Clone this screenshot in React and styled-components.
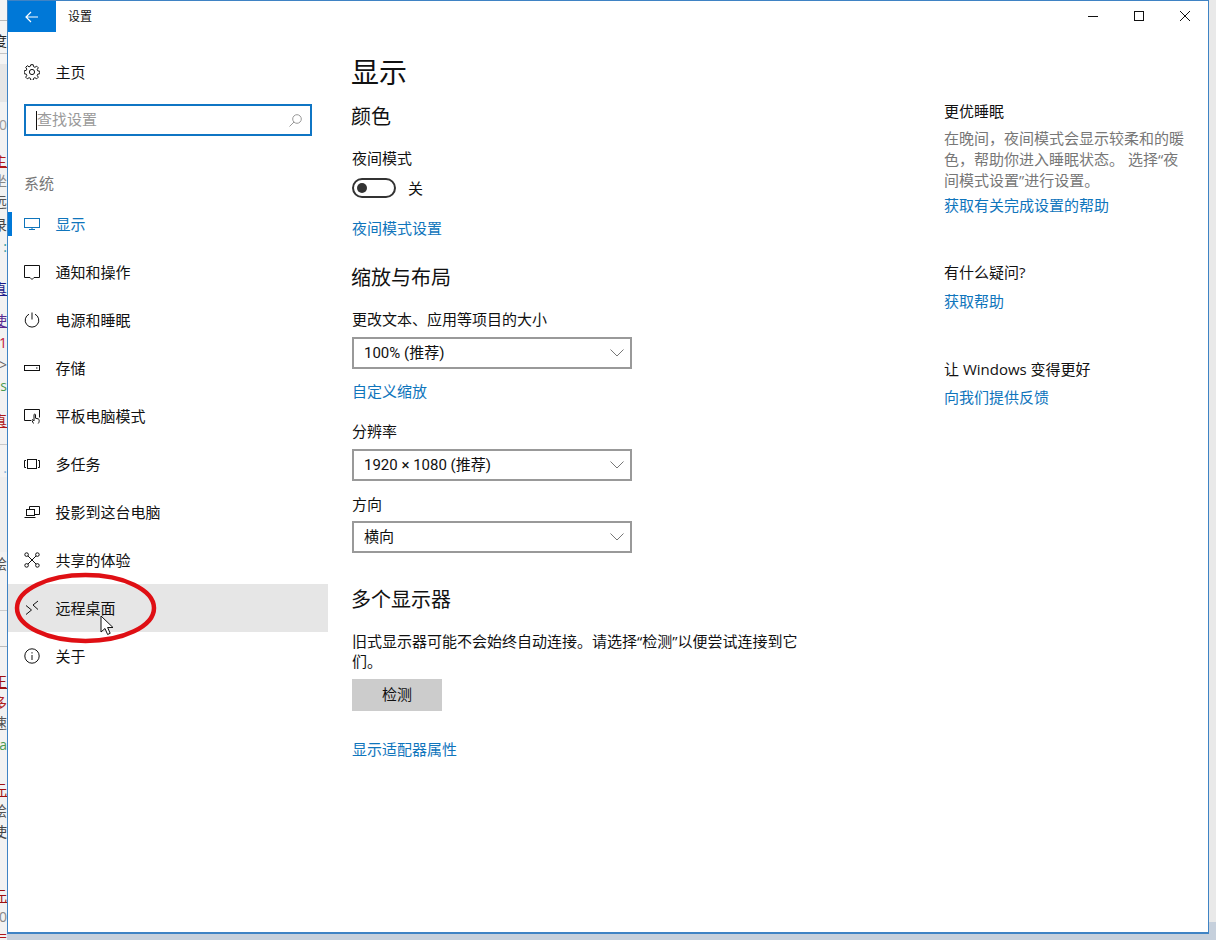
import React from 'react';
import styled, { createGlobalStyle } from 'styled-components';

const GlobalStyle = createGlobalStyle`
	html, body {
		margin: 0;
		padding: 0;
		background: #c6d0dc;
	}
	body {
		font-family: 'Open Sans', 'Noto Sans CJK SC', sans-serif;
		color: #111;
	}
`;

const stripRows = [
	{ h: 20, bg: '#f4f4f4' },
	{ h: 1, bg: '#b8b8b8' },
	{ h: 8, bg: '#f4f4f4' },
	{ h: 24, text: '度', color: '#222', bg: '#f4f4f4' },
	{ h: 1, bg: '#c4c4c4' },
	{ h: 10, bg: '#f4f4f4' },
	{ h: 38, bg: '#e6e6e6' },
	{ h: 13, bg: '#f2f2f2' },
	{ h: 20, text: '0', color: '#999', bg: '#f2f2f2' },
	{ h: 15, bg: '#f2f2f2' },
	{ h: 22, text: '主', color: '#b01818', line: true, bg: '#f2f2f2' },
	{ h: 18, text: '坐', color: '#888', bg: '#f2f2f2' },
	{ h: 24, text: '远', color: '#555', bg: '#f2f2f2' },
	{ h: 22, text: '录', color: '#444', bg: '#f2f2f2' },
	{ h: 22, text: ':', color: '#2a9aa0', bg: '#f2f2f2' },
	{ h: 24, bg: '#f2f2f2' },
	{ h: 14, text: '真', color: '#1a1a8a', line: true, bg: '#f2f2f2' },
	{ h: 14, bg: '#f2f2f2' },
	{ h: 22, text: '使', color: '#5a2a90', line: true, bg: '#f2f2f2' },
	{ h: 22, text: '1', color: '#c0203a', bg: '#f2f2f2' },
	{ h: 22, text: '>', color: '#666', bg: '#f2f2f2' },
	{ h: 20, text: 's', color: '#4a9a50', bg: '#f2f2f2' },
	{ h: 14, bg: '#f2f2f2' },
	{ h: 22, text: '真', color: '#b01818', line: true, bg: '#f2f2f2' },
	{ h: 12, bg: '#f2f2f2' },
	{ h: 1, bg: '#c8c8c8' },
	{ h: 14, bg: '#f2f2f2' },
	{ h: 18, text: '.', color: '#7ab0d8', bg: '#f2f2f2' },
	{ h: 75, bg: '#eeeeee' },
	{ h: 24, text: '绘', color: '#555', bg: '#f2f2f2' },
	{ h: 16, text: '。', color: '#444', bg: '#f2f2f2' },
	{ h: 18, bg: '#f2f2f2' },
	{ h: 1, bg: '#cccccc' },
	{ h: 35, bg: '#f2f2f2' },
	{ h: 1, bg: '#bbbbbb' },
	{ h: 24, bg: '#f2f2f2' },
	{ h: 22, text: '正', color: '#a01010', line: true, bg: '#f2f2f2' },
	{ h: 20, text: '多', color: '#b02020', bg: '#f2f2f2' },
	{ h: 20, text: '速', color: '#555', bg: '#f2f2f2' },
	{ h: 24, text: 'a', color: '#4a9a50', bg: '#f2f2f2' },
	{ h: 22, bg: '#f2f2f2' },
	{ h: 22, text: '元', color: '#a01010', line: true, bg: '#f2f2f2' },
	{ h: 20, text: '绘', color: '#555', bg: '#f2f2f2' },
	{ h: 22, text: '使', color: '#444', bg: '#f2f2f2' },
	{ h: 42, bg: '#f2f2f2' },
	{ h: 22, text: '元', color: '#a01010', line: true, bg: '#f2f2f2' },
	{ h: 20, text: '0', color: '#888', bg: '#f2f2f2' },
	{ h: 18, text: '=', color: '#b01818', bg: '#f2f2f2' },
	{ h: 30, bg: '#d6dde6' },
];

const GearIcon = () => (
	<NavSvg viewBox="0 0 16 16">
		<circle cx="8" cy="8" r="2.6" />
		<path d="M6.8.7h2.4l.4 2 1.3.6 1.8-1.1 1.6 1.6-1.1 1.8.6 1.3 2 .4v2.4l-2 .4-.6 1.3 1.1 1.8-1.6 1.6-1.8-1.1-1.3.6-.4 2H6.8l-.4-2-1.3-.6-1.8 1.1-1.6-1.6 1.1-1.8-.6-1.3-2-.4V6.8l2-.4.6-1.3-1.1-1.8 1.6-1.6 1.8 1.1 1.3-.6z" />
	</NavSvg>
);

const MonitorIcon = () => (
	<NavSvg viewBox="0 0 16 16">
		<rect x="0.5" y="2.5" width="15" height="9" />
		<path d="M8 11.5v2M5 13.5h6" />
	</NavSvg>
);

const BubbleIcon = () => (
	<NavSvg viewBox="0 0 16 16">
		<path d="M.5 1.5h15v12H10l-2 2-2-2H.5z" />
	</NavSvg>
);

const PowerIcon = () => (
	<NavSvg viewBox="0 0 16 16">
		<path d="M8 .5v7M5 2.2a6.8 6.8 0 1 0 6 0" />
	</NavSvg>
);

const StorageIcon = () => (
	<NavSvg viewBox="0 0 16 16">
		<rect x="0.5" y="5.5" width="15" height="5" />
		<path d="M12 8h1.5" />
	</NavSvg>
);

const TabletIcon = () => (
	<NavSvg viewBox="0 0 16 16">
		<path d="M7 12.5H.5v-11h15v8" />
		<path d="M9.5 15.5 8 12.5c-.3-.8.6-1.2 1.1-.6l.9 1V6.8c0-1 1.5-1 1.5 0v3.4l2.5.6c.9.2 1.2.8 1.2 1.6 0 1.6-.4 2.4-1 3.1" />
	</NavSvg>
);

const MultitaskIcon = () => (
	<NavSvg viewBox="0 0 16 16">
		<rect x="3.5" y="3.5" width="9" height="9" />
		<path d="M2 4.5H.5v7H2M14 4.5h1.5v7H14" />
	</NavSvg>
);

const ProjectIcon = () => (
	<NavSvg viewBox="0 0 16 16">
		<path d="M5.5 5.5v-3h10v8h-5" />
		<rect x="2.5" y="5.5" width="8" height="6" />
		<path d="M.5 13.5h11" />
	</NavSvg>
);

const ShareIcon = () => (
	<NavSvg viewBox="0 0 16 16">
		<circle cx="2.6" cy="2.6" r="1.8" />
		<circle cx="13.4" cy="2.6" r="1.8" />
		<circle cx="2.6" cy="13.4" r="1.8" />
		<circle cx="13.4" cy="13.4" r="1.8" />
		<path d="M4 4l8 8M12 4l-8 8" />
	</NavSvg>
);

const RemoteIcon = () => (
	<NavSvg viewBox="0 0 16 16">
		<path d="M2 5.500 7.500 10 2 14.500M14 1 9 5l5 4.500" />
	</NavSvg>
);

const InfoIcon = () => (
	<NavSvg viewBox="0 0 16 16">
		<circle cx="8" cy="8" r="7.2" />
		<path d="M8 7v5M8 4.200v1.300" />
	</NavSvg>
);

const navItems = [
	{ label: '显示', Icon: MonitorIcon, active: true },
	{ label: '通知和操作', Icon: BubbleIcon },
	{ label: '电源和睡眠', Icon: PowerIcon },
	{ label: '存储', Icon: StorageIcon },
	{ label: '平板电脑模式', Icon: TabletIcon },
	{ label: '多任务', Icon: MultitaskIcon },
	{ label: '投影到这台电脑', Icon: ProjectIcon },
	{ label: '共享的体验', Icon: ShareIcon },
	{ label: '远程桌面', Icon: RemoteIcon, hover: true },
	{ label: '关于', Icon: InfoIcon },
];

const Chevron = () => (
	<svg width="14" height="8" viewBox="0 0 14 8" fill="none" stroke="#777" strokeWidth="1">
		<path d="M.5.500 7 7l6.500-6.500" />
	</svg>
);

export default function App() {
	return (
		<>
			<GlobalStyle />
			<Screen>
				<BackStrip>
					{stripRows.map((row, i) => (
						<StripRow key={i} $h={row.h} $bg={row.bg} $color={row.color} $line={row.line}>
							{row.text}
						</StripRow>
					))}
				</BackStrip>
				<Window>
					<TitleBar>
						<BackButton>
							<svg width="14" height="12" viewBox="0 0 14 12" fill="none" stroke="#fff" strokeWidth="1.2">
								<path d="M13 6H1M6 1 1 6l5 5" />
							</svg>
						</BackButton>
						<WindowTitle>设置</WindowTitle>
						<Controls>
							<ControlButton>
								<svg width="10" height="10" viewBox="0 0 10 10" fill="none" stroke="#111">
									<path d="M0 5.500h10" />
								</svg>
							</ControlButton>
							<ControlButton>
								<svg width="10" height="10" viewBox="0 0 10 10" fill="none" stroke="#111">
									<rect x="0.5" y="0.5" width="9" height="9" />
								</svg>
							</ControlButton>
							<ControlButton>
								<svg width="10" height="10" viewBox="0 0 10 10" fill="none" stroke="#111">
									<path d="M0 0l10 10M10 0 0 10" />
								</svg>
							</ControlButton>
						</Controls>
					</TitleBar>
					<Body>
						<Sidebar>
							<HomeRow>
								<GearIcon />
								<NavText>主页</NavText>
							</HomeRow>
							<SearchBox>
								<Caret />
								<SearchHint>查找设置</SearchHint>
								<svg width="13" height="13" viewBox="0 0 13 13" fill="none" stroke="#999" strokeWidth="1">
									<circle cx="8" cy="5" r="4.300" />
									<path d="M5 8 .5 12.500" />
								</svg>
							</SearchBox>
							<GroupLabel>系统</GroupLabel>
							<NavList>
								{navItems.map(({ label, Icon, active, hover }) => (
									<NavRow key={label} $active={active} $hover={hover}>
										<Icon />
										<NavText>{label}</NavText>
									</NavRow>
								))}
							</NavList>
						</Sidebar>
						<Content>
							<PageTitle>显示</PageTitle>
							<SectionTitle $top={10}>颜色</SectionTitle>
							<Label $top={18}>夜间模式</Label>
							<ToggleRow>
								<Toggle>
									<ToggleDot />
								</Toggle>
								<ToggleState>关</ToggleState>
							</ToggleRow>
							<TextLink $top={20}>夜间模式设置</TextLink>
							<SectionTitle $top={25}>缩放与布局</SectionTitle>
							<Label $top={18}>更改文本、应用等项目的大小</Label>
							<SelectBox $top={8}>
								<span>100% (推荐)</span>
								<Chevron />
							</SelectBox>
							<TextLink $top={12}>自定义缩放</TextLink>
							<Label $top={20}>分辨率</Label>
							<SelectBox $top={8}>
								<span>1920 × 1080 (推荐)</span>
								<Chevron />
							</SelectBox>
							<Label $top={13}>方向</Label>
							<SelectBox $top={7}>
								<span>横向</span>
								<Chevron />
							</SelectBox>
							<SectionTitle $top={32}>多个显示器</SectionTitle>
							<Paragraph>旧式显示器可能不会始终自动连接。请选择“检测”以便尝试连接到它们。</Paragraph>
							<DetectButton>检测</DetectButton>
							<TextLink $top={28}>显示适配器属性</TextLink>
						</Content>
						<Aside>
							<Label>更优睡眠</Label>
							<AsideText>在晚间，夜间模式会显示较柔和的暖色，帮助你进入睡眠状态。 选择“夜间模式设置”进行设置。</AsideText>
							<TextLink $top={4}>获取有关完成设置的帮助</TextLink>
							<Label $top={47}>有什么疑问?</Label>
							<TextLink $top={9}>获取帮助</TextLink>
							<Label $top={48}>让 Windows 变得更好</Label>
							<TextLink $top={8}>向我们提供反馈</TextLink>
						</Aside>
					</Body>
					<Ellipse width="146" height="74" viewBox="0 0 146 74" fill="none">
						<ellipse cx="73.500" cy="36" rx="68.500" ry="33" stroke="#df0f14" strokeWidth="4.500" />
					</Ellipse>
					<Pointer width="14" height="21" viewBox="0 0 14 21">
						<path d="M1 1v16l4-3.500 2.600 6 2.600-1.200-2.600-5.800h5.400z" fill="#fff" stroke="#111" strokeWidth="1" />
					</Pointer>
				</Window>
				<SideGutter />
			</Screen>
		</>
	);
}

const Screen = styled.div`
	display: flex;
	align-items: flex-start;
	width: 1216px;
	height: 940px;
	overflow: hidden;
	position: relative;
`;

const BackStrip = styled.div`
	display: flex;
	flex-direction: column;
	flex: 0 0 7px;
	height: 940px;
	overflow: hidden;
`;

const StripRow = styled.div`
	display: flex;
	flex: 0 0 ${(p) => p.$h}px;
	justify-content: flex-end;
	align-items: center;
	font-size: 14px;
	line-height: ${(p) => p.$h}px;
	overflow: hidden;
	color: ${(p) => p.$color || '#333'};
	background: ${(p) => p.$bg};
	text-decoration: ${(p) => (p.$line ? 'underline' : 'none')};
`;

const SideGutter = styled.div`
	flex: 0 0 7px;
	height: 922px;
	background: #e9e9e9;
`;

const Window = styled.div`
	position: relative;
	box-sizing: border-box;
	flex: 0 0 1202px;
	height: 934px;
	border: 1px solid #3f83c4;
	border-bottom-width: 2px;
	background: #fff;
`;

const TitleBar = styled.div`
	display: flex;
	align-items: center;
	height: 31px;
`;

const BackButton = styled.div`
	display: flex;
	align-items: center;
	justify-content: center;
	width: 48px;
	height: 31px;
	background: #0078d7;
`;

const WindowTitle = styled.div`
	margin: 0 0 2px 12px;
	font-size: 12px;
`;

const Controls = styled.div`
	display: flex;
	margin-left: auto;
`;

const ControlButton = styled.div`
	box-sizing: border-box;
	display: flex;
	align-items: center;
	justify-content: center;
	width: 46px;
	height: 31px;
	padding-bottom: 1px;
`;

const Body = styled.div`
	display: grid;
	grid-template-columns: 320px 616px 1fr;
`;

const Sidebar = styled.div`
	display: flex;
	flex-direction: column;
`;

const NavSvg = styled.svg.attrs({ fill: 'none', stroke: 'currentColor', strokeWidth: 1 })`
	flex: 0 0 16px;
	width: 16px;
	height: 16px;
	margin-right: 16px;
`;

const HomeRow = styled.div`
	display: flex;
	align-items: center;
	height: 24px;
	margin-top: 28px;
	padding-left: 16px;
	color: #111;
`;

const NavText = styled.span`
	margin-left: -0.5px;
	font-size: 15px;
	line-height: 20px;
`;

const SearchBox = styled.div`
	box-sizing: border-box;
	display: flex;
	align-items: center;
	width: 288px;
	height: 32px;
	margin: 20px 0 0 16px;
	padding: 0 8px 0 10px;
	border: 2px solid #0f75c4;
`;

const Caret = styled.div`
	width: 1px;
	height: 19px;
	background: #111;
`;

const SearchHint = styled.span`
	flex: 1;
	padding-bottom: 3px;
	font-size: 15px;
	line-height: 20px;
	color: #9a9a9a;
`;

const GroupLabel = styled.div`
	margin: 37px 0 0 16px;
	font-size: 15px;
	line-height: 20px;
	color: #777;
`;

const NavList = styled.div`
	display: flex;
	flex-direction: column;
	margin-top: 7px;
`;

const NavRow = styled.div`
	position: relative;
	display: flex;
	align-items: center;
	height: 48px;
	padding-left: 16px;
	color: ${(p) => (p.$active ? '#0f75bc' : '#111')};
	background: ${(p) => (p.$hover ? '#e6e6e6' : 'transparent')};
	&::before {
		content: '';
		display: ${(p) => (p.$active ? 'block' : 'none')};
		position: absolute;
		left: 0;
		top: 12px;
		width: 4px;
		height: 24px;
		background: #0078d7;
	}
`;

const Content = styled.div`
	display: flex;
	flex-direction: column;
	align-items: flex-start;
	padding: 20px 0 0 24px;
`;

const PageTitle = styled.h1`
	margin: 0 0 0 -1px;
	font-size: 28px;
	font-weight: 400;
	line-height: 40px;
`;

const SectionTitle = styled.h2`
	margin: ${(p) => p.$top}px 0 -1px -1px;
	padding-top: 1px;
	font-size: 20px;
	font-weight: 400;
	line-height: 28px;
`;

const Label = styled.div`
	margin-top: ${(p) => p.$top || 0}px;
	font-size: 15px;
	line-height: 20px;
`;

const ToggleRow = styled.div`
	display: flex;
	align-items: center;
	gap: 12px;
	margin-top: 10px;
	height: 20px;
	font-size: 15px;
`;

const ToggleState = styled.span`
	padding-bottom: 2px;
`;

const Toggle = styled.div`
	box-sizing: border-box;
	display: flex;
	align-items: center;
	width: 44px;
	height: 20px;
	padding-left: 3px;
	border: 2px solid #333;
	border-radius: 10px;
`;

const ToggleDot = styled.div`
	width: 10px;
	height: 10px;
	border-radius: 50%;
	background: #333;
`;

const TextLink = styled.a`
	display: block;
	margin-top: ${(p) => p.$top || 0}px;
	font-size: 15px;
	line-height: 20px;
	color: #0f75bc;
`;

const SelectBox = styled.div`
	box-sizing: border-box;
	display: flex;
	align-items: center;
	justify-content: space-between;
	width: 280px;
	height: 32px;
	margin-top: ${(p) => p.$top}px;
	padding: 0 6px 0 10px;
	border: 2px solid #999;
	font-family: Roboto, 'Noto Sans CJK SC', sans-serif;
	font-size: 15px;
	& > span {
		padding-bottom: 3px;
	}
`;

const Paragraph = styled.p`
	width: 450px;
	margin: 18px 0 0;
	font-size: 15px;
	line-height: 20px;
`;

const DetectButton = styled.div`
	box-sizing: border-box;
	display: flex;
	align-items: center;
	justify-content: center;
	width: 90px;
	height: 32px;
	margin-top: 8px;
	padding-bottom: 3px;
	background: #ccc;
	font-size: 15px;
`;

const Aside = styled.div`
	display: flex;
	flex-direction: column;
	align-items: flex-start;
	padding-top: 69px;
`;

const AsideText = styled.p`
	width: 244px;
	margin: 7px 0 0;
	font-size: 15px;
	line-height: 21px;
	color: #777;
`;

const Ellipse = styled.svg`
	position: absolute;
	left: 4px;
	top: 571px;
`;

const Pointer = styled.svg`
	position: absolute;
	left: 92px;
	top: 614px;
`;
